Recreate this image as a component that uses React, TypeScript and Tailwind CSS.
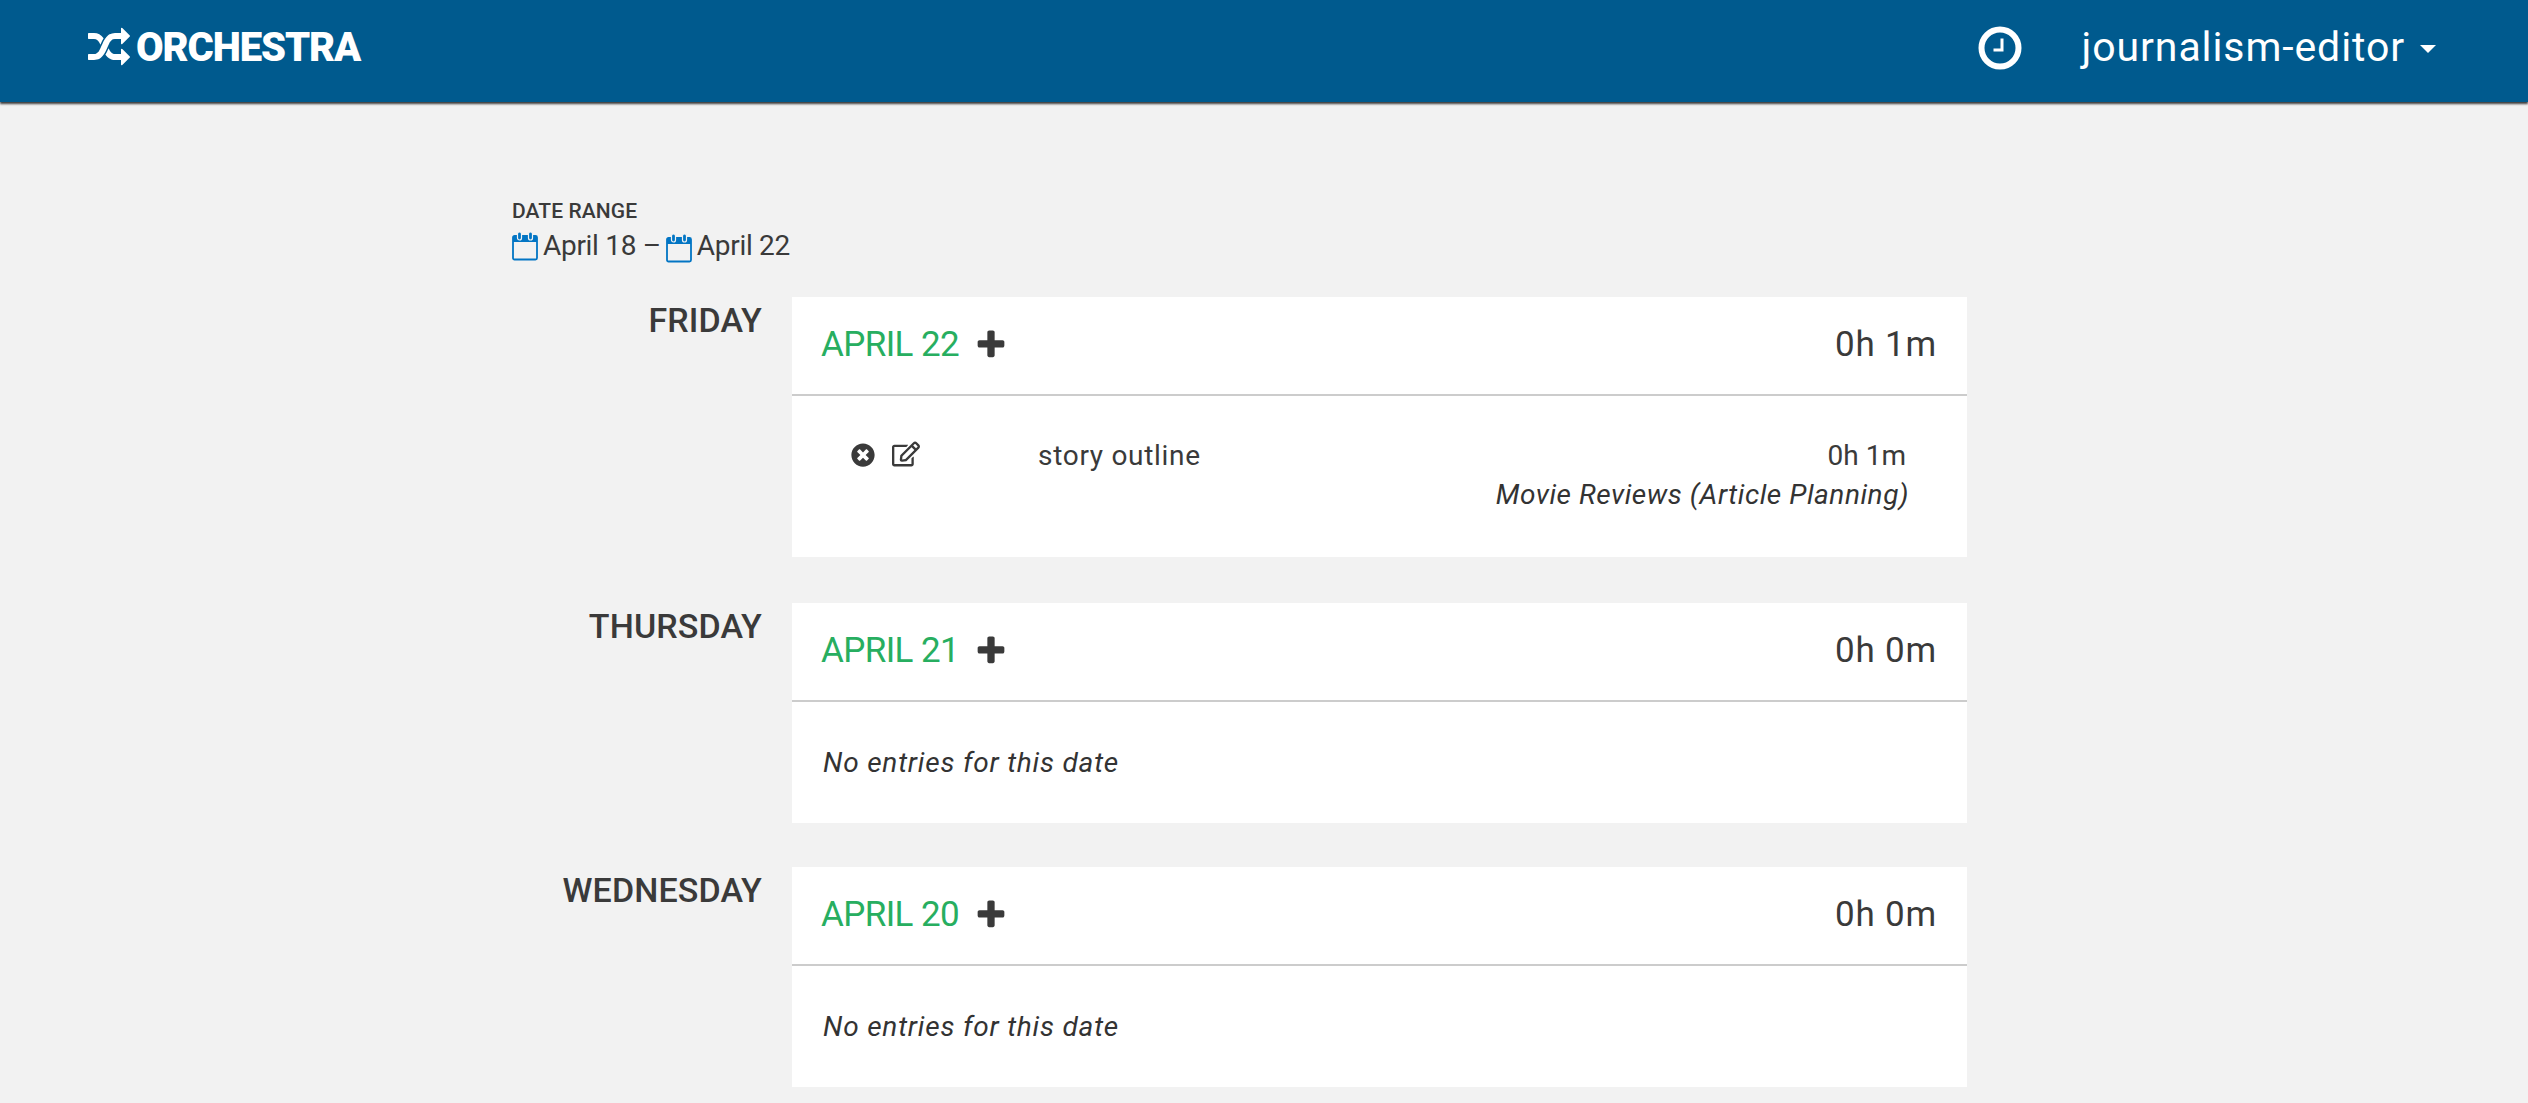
import React from "react";
import { FaTimesCircle, FaRegEdit } from "react-icons/fa";

function Shuffle() {
  return (
    <svg width="42" height="42" viewBox="0 0 1792 1792" fill="white" className="mr-[6px] shrink-0">
      <path d="M666 481q-60 92-137 273-22-45-37-72.5t-40.5-63.5-51-56.5-63-35-81.5-14.5h-224q-14 0-23-9t-9-23v-192q0-14 9-23t23-9h224q250 0 410 225zm1126 799q0 14-9 23l-320 320q-9 9-23 9-13 0-22.5-9.5t-9.5-22.5v-192q-32 0-85 .5t-81 1-73-1-71-5-64-10.5-63-18.5-58-28.5-59-40-55-53.5-56-69.5q59-93 136-273 22 45 37 72.5t40.5 63.5 51 56.5 63 35 81.5 14.5h256v-192q0-14 9-23t23-9q12 0 24 10l319 319q9 9 9 23zm0-896q0 14-9 23l-320 320q-9 9-23 9-13 0-22.5-9.5t-9.5-22.5v-192h-256q-48 0-87 15t-69 45-51 61.5-45 77.5q-32 62-78 171-29 66-49.5 111t-54 105-64 100-74 83-90 68.5-106.5 42-128 16.5h-224q-14 0-23-9t-9-23v-192q0-14 9-23t23-9h224q48 0 87-15t69-45 51-61.5 45-77.5q32-62 78-171 29-66 49.5-111t54-105 64-100 74-83 90-68.5 106.5-42 128-16.5h256v-192q0-14 9-23t23-9q12 0 24 10l319 319q9 9 9 23z" />
    </svg>
  );
}

function Plus({ className }: { className?: string }) {
  return (
    <svg width="34" height="34" viewBox="0 0 1792 1792" fill="#3a3a3a" className={className}>
      <path d="M1600 736v192q0 40-28 68t-68 28h-416v416q0 40-28 68t-68 28h-192q-40 0-68-28t-28-68v-416h-416q-40 0-68-28t-28-68v-192q0-40 28-68t68-28h416v-416q0-40 28-68t68-28h192q40 0 68 28t28 68v416h416q40 0 68 28t28 68z" />
    </svg>
  );
}

function Clock() {
  return (
    <svg width="44" height="44" viewBox="0 0 44 44" fill="none" stroke="white">
      <circle cx="22" cy="22" r="18.5" strokeWidth="6" />
      <path d="M24 12.5v11.5H15.5" strokeWidth="3" />
    </svg>
  );
}

function Cal() {
  return (
    <svg width="26" height="30" viewBox="0 0 26 30" className="inline-block shrink-0">
      <rect x="1" y="5" width="24" height="23.5" rx="1.5" fill="none" stroke="#0275c4" strokeWidth="1.8" />
      <path d="M1 6.5a1.5 1.5 0 0 1 1.5-1.5h21a1.5 1.5 0 0 1 1.5 1.5V11H1z" fill="#0275c4" />
      <rect x="5.5" y="1" width="4" height="8" rx="2" fill="#0275c4" stroke="#f2f2f2" strokeWidth="1.2" />
      <rect x="16.5" y="1" width="4" height="8" rx="2" fill="#0275c4" stroke="#f2f2f2" strokeWidth="1.2" />
    </svg>
  );
}

function DayHead({ date, total }: { date: string; total: string }) {
  return (
    <div className="h-[99px] pl-[29px] pr-[30px] flex items-center justify-between border-b-2 border-[#cccccc]">
      <div className="flex items-center">
        <span className="text-[35px] text-[#27ae60] tracking-[-0.6px]">{date}</span>
        <Plus className="ml-[15px] -mt-[2px]" />
      </div>
      <span className="text-[35px] text-[#3a3a3a] tracking-[0.8px]">{total}</span>
    </div>
  );
}

function Empty() {
  return (
    <div className="h-[121px] pl-[31px] pt-[43px] text-[28px] leading-[36px] italic text-[#333333] tracking-[0.8px]">
      No entries for this date
    </div>
  );
}

function Day({ name, children, className }: { name: string; children: React.ReactNode; className?: string }) {
  return (
    <div className={`flex ${className ?? ""}`}>
      <div className="w-[250px] mr-[30px] pt-[1px] text-right text-[34px] leading-[44px] font-medium text-[#3a3a3a] tracking-[0.1px] whitespace-nowrap">
        {name}
      </div>
      <div className="w-[1175px] bg-white">{children}</div>
    </div>
  );
}

export default function App() {
  return (
    <div
      className="h-[1103px] overflow-hidden bg-[#f2f2f2] text-[#3a3a3a]"
      style={{ fontFamily: "Roboto, 'Liberation Sans', sans-serif" }}
    >
      <header className="h-[102px] pb-[6px] bg-[#005a8e] shadow-[0_2px_2px_rgba(0,0,0,0.75)] flex items-center justify-between pl-[88px] pr-[92px] text-white">
        <div className="flex items-center">
          <Shuffle />
          <span className="text-[40px] font-black tracking-[-1.1px]">ORCHESTRA</span>
        </div>
        <div className="flex items-center">
          <Clock />
          <span className="ml-[60px] text-[41px] tracking-[0.9px]">journalism-editor</span>
          <span className="ml-[15px] mt-[2px] w-0 h-0 border-x-[8px] border-x-transparent border-t-[8px] border-t-white" />
        </div>
      </header>
      <main className="pl-[512px] pt-[96px]">
        <div className="text-[21px] leading-[26px] font-medium tracking-[0.1px]">DATE RANGE</div>
        <div className="flex items-center text-[28px] leading-[36px] mt-[5px] mb-[34px] h-[34px] tracking-[-0.3px]">
          <Cal />
          <span className="ml-[5px]">April 18 –</span>
          <span className="ml-[5px]"><Cal /></span>
          <span className="ml-[5px]">April 22</span>
        </div>
        <Day name="FRIDAY" className="mb-[46px]">
          <DayHead date="APRIL 22" total="0h 1m" />
          <div className="h-[161px] flex pt-[44px] pl-[59px] pr-[58px]">
            <FaTimesCircle className="text-[24px] text-[#3a3a3a] mt-[3px]" />
            <FaRegEdit className="text-[28px] text-[#3a3a3a] ml-[17px]" />
            <span className="ml-[118px] -mt-[1px] text-[28px] leading-[34px] text-[#3a3a3a] tracking-[0.7px]">story outline</span>
            <div className="ml-auto text-right -mt-[1px]">
              <div className="text-[28px] leading-[34px] mr-[3px]">0h 1m</div>
              <div className="mt-[2px] text-[28px] leading-[40px] italic text-[#333333] tracking-[0.55px]">Movie Reviews (Article Planning)</div>
            </div>
          </div>
        </Day>
        <Day name="THURSDAY" className="mb-[44px]">
          <DayHead date="APRIL 21" total="0h 0m" />
          <Empty />
        </Day>
        <Day name="WEDNESDAY">
          <DayHead date="APRIL 20" total="0h 0m" />
          <Empty />
        </Day>
      </main>
    </div>
  );
}
